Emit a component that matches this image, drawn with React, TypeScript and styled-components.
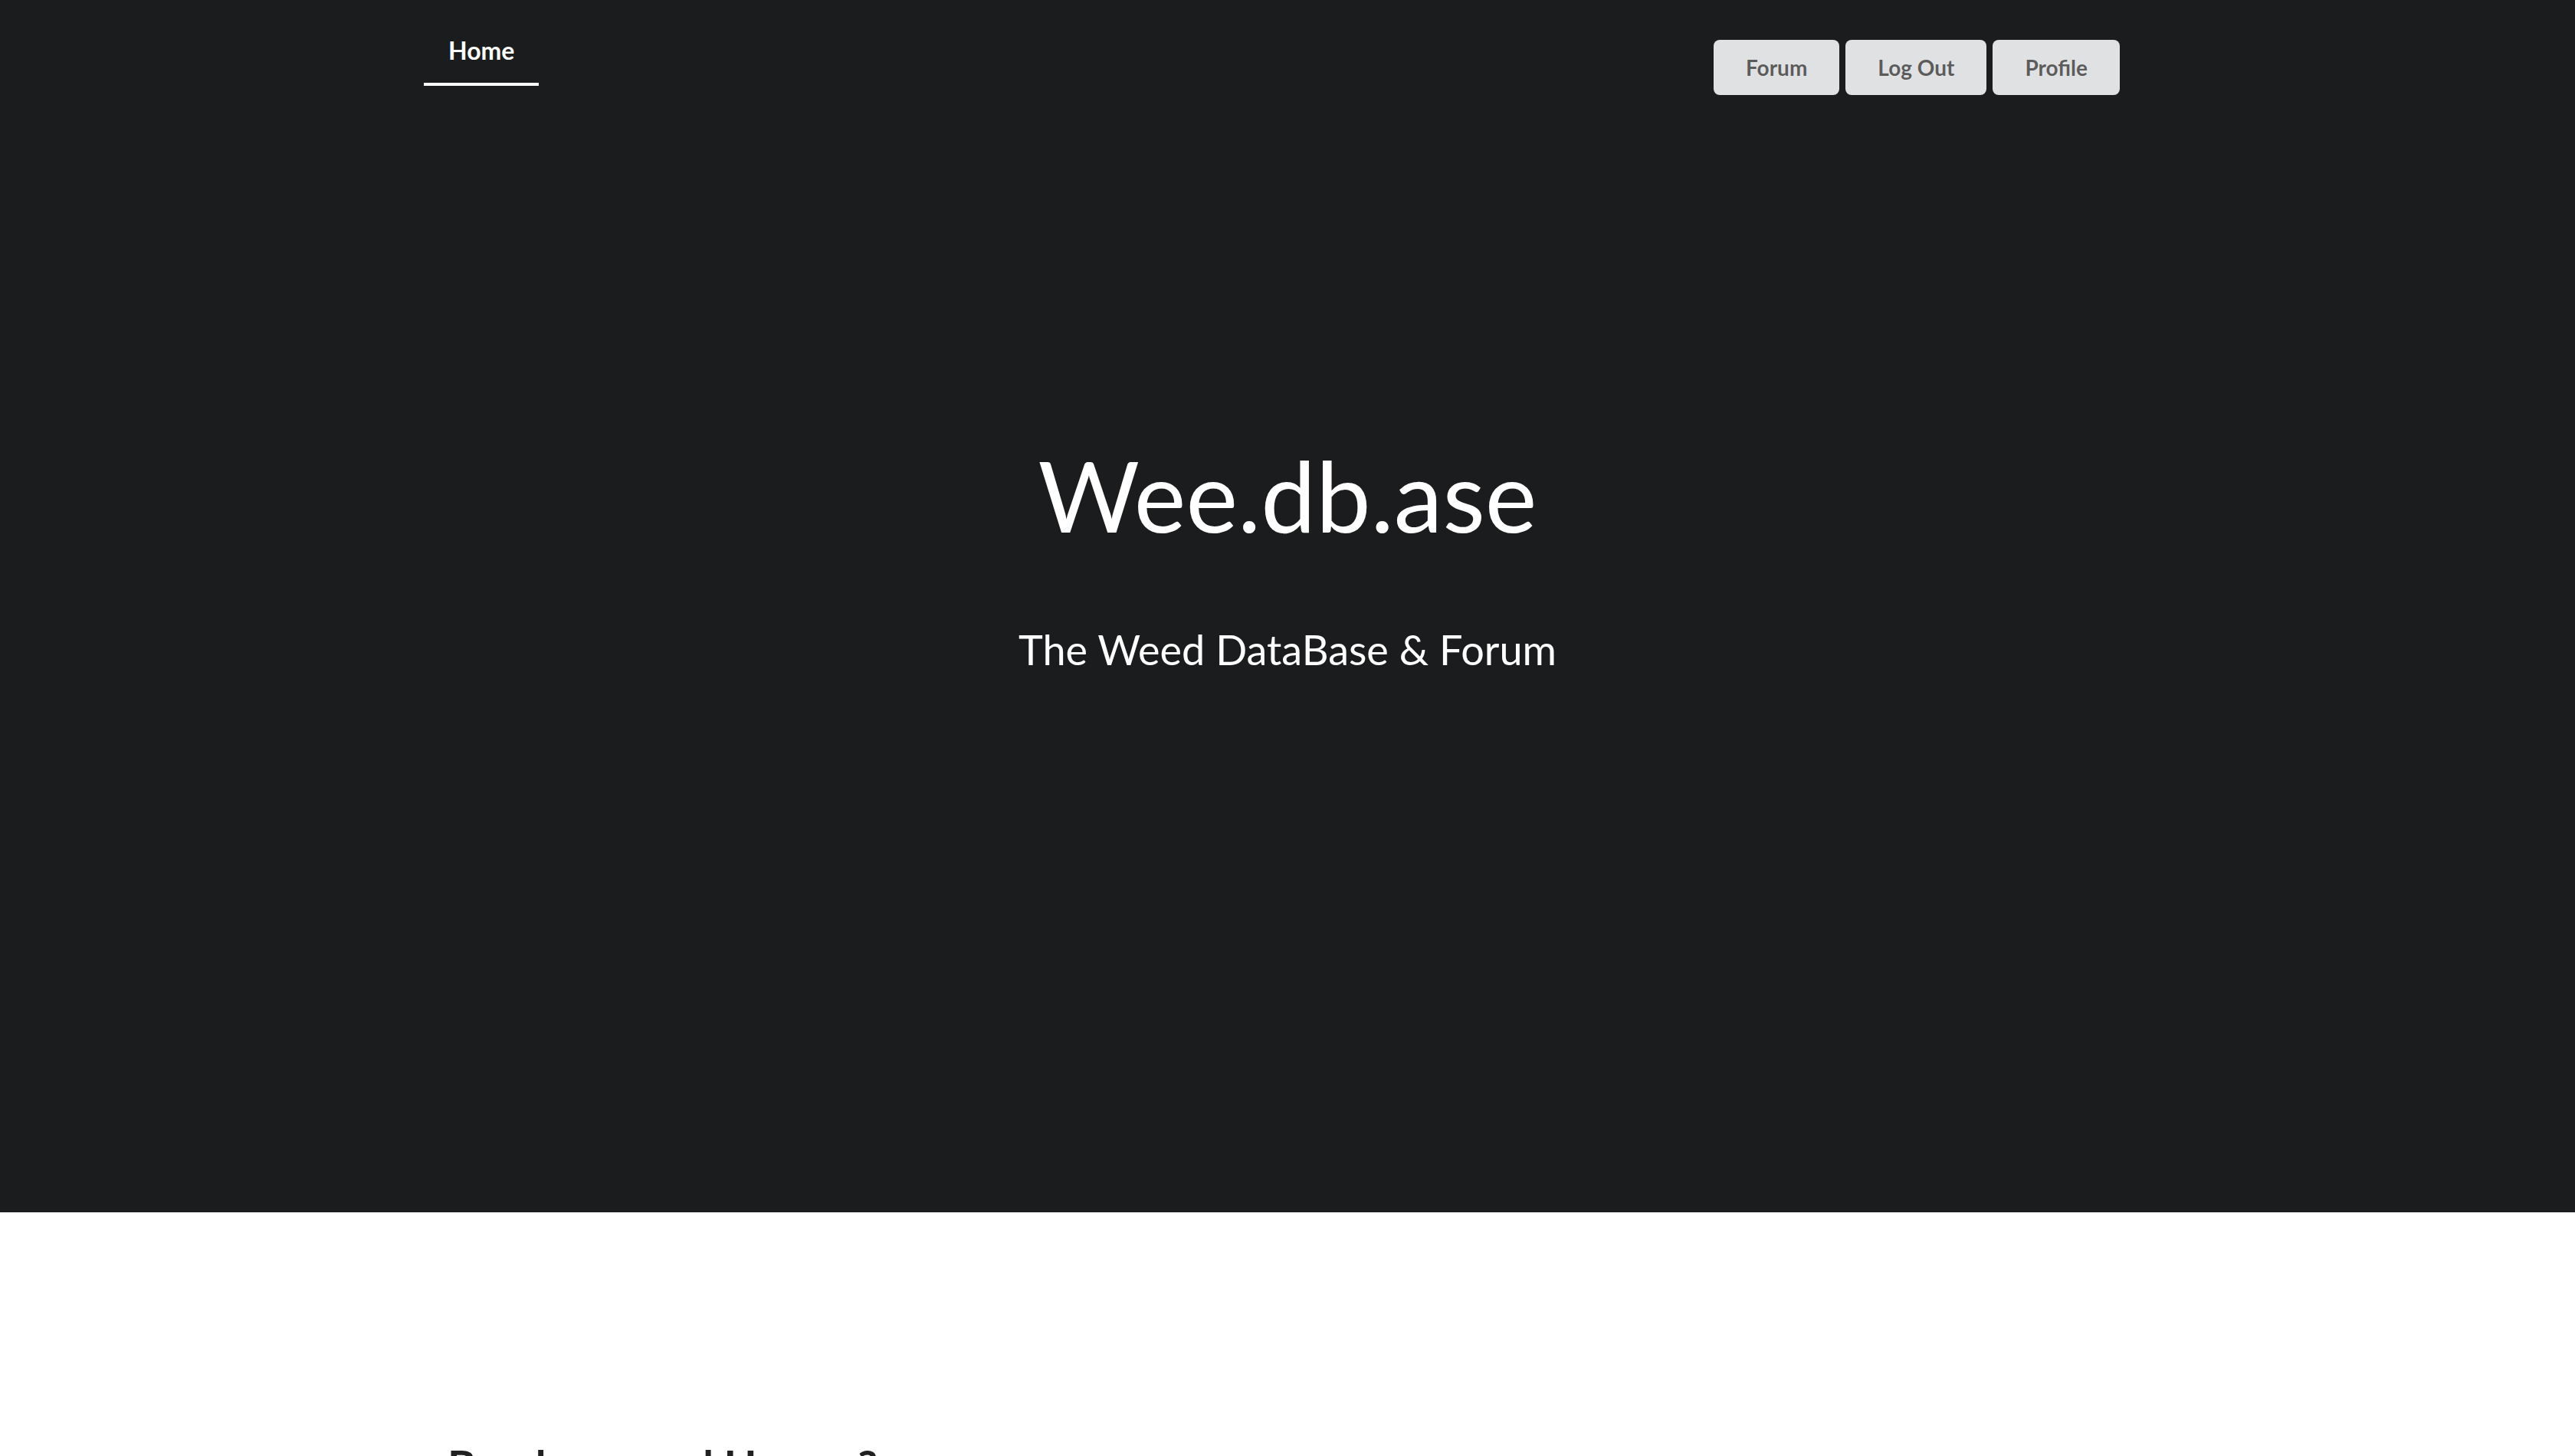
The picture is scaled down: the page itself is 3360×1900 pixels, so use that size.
import React from "react";
import styled, { createGlobalStyle } from "styled-components";

const GlobalStyle = createGlobalStyle`
  html, body {
    margin: 0;
    padding: 0;
    background: #ffffff;
    font-family: Lato, "Helvetica Neue", Arial, sans-serif;
  }
  * { box-sizing: border-box; }
`;

const Masthead = styled.header`
  background: #1b1c1d;
  height: 1582px;
  display: flex;
  flex-direction: column;
`;

const Container = styled.div`
  width: 2254px;
  margin: 0 auto;
`;

const Nav = styled(Container)`
  display: flex;
  align-items: flex-start;
  justify-content: space-between;
  padding-top: 23px;
`;

const MenuItem = styled.a<{ $active?: boolean }>`
  display: block;
  padding: 27px 32px 26px;
  font-size: 32px;
  line-height: 32px;
  font-weight: ${(p) => (p.$active ? 700 : 400)};
  color: #ffffff;
  border-bottom: 4px solid ${(p) => (p.$active ? "#ffffff" : "transparent")};
  text-decoration: none;
  cursor: pointer;
`;

const ButtonGroup = styled.div`
  display: flex;
  gap: 8px;
  padding-top: 29px;
  padding-right: 41px;
`;

const Button = styled.button`
  height: 72px;
  padding: 0 42px;
  border: none;
  border-radius: 8px;
  background: #e0e1e2;
  color: rgba(0, 0, 0, 0.6);
  font-family: Lato, "Helvetica Neue", Arial, sans-serif;
  font-size: 28px;
  font-weight: 700;
  line-height: 28px;
  cursor: pointer;
`;

const Hero = styled.div`
  display: flex;
  flex-direction: column;
  align-items: center;
  text-align: center;
  color: #ffffff;
`;

const Title = styled.h1`
  margin: 439px 0 0;
  font-size: 128px;
  line-height: 165px;
  font-weight: 400;
`;

const Subtitle = styled.h2`
  margin: 84px 0 0;
  font-size: 54px;
  line-height: 72px;
  font-weight: 400;
`;

const Stripe = styled.section`
  padding-top: 294px;
  padding-bottom: 200px;
`;

const StripeInner = styled(Container)`
  padding: 0 31px;
`;

const SectionHeading = styled.h3`
  margin: 0;
  font-size: 56px;
  line-height: 72px;
  font-weight: 700;
  color: rgba(0, 0, 0, 0.87);
`;

const Paragraph = styled.p`
  margin: 28px 0 0;
  font-size: 36px;
  line-height: 1.4;
  color: rgba(0, 0, 0, 0.87);
`;

export default function App() {
  return (
    <>
      <GlobalStyle />
      <Masthead>
        <Nav>
          <MenuItem $active>Home</MenuItem>
          <ButtonGroup>
            <Button>Forum</Button>
            <Button>Log Out</Button>
            <Button>Profile</Button>
          </ButtonGroup>
        </Nav>
        <Hero>
          <Title>Wee.db.ase</Title>
          <Subtitle>The Weed DataBase &amp; Forum</Subtitle>
        </Hero>
      </Masthead>
      <Stripe>
        <StripeInner>
          <SectionHeading>Break or need Homes?</SectionHeading>
          <Paragraph>Browse strains, share reviews and join the conversation.</Paragraph>
        </StripeInner>
      </Stripe>
    </>
  );
}
